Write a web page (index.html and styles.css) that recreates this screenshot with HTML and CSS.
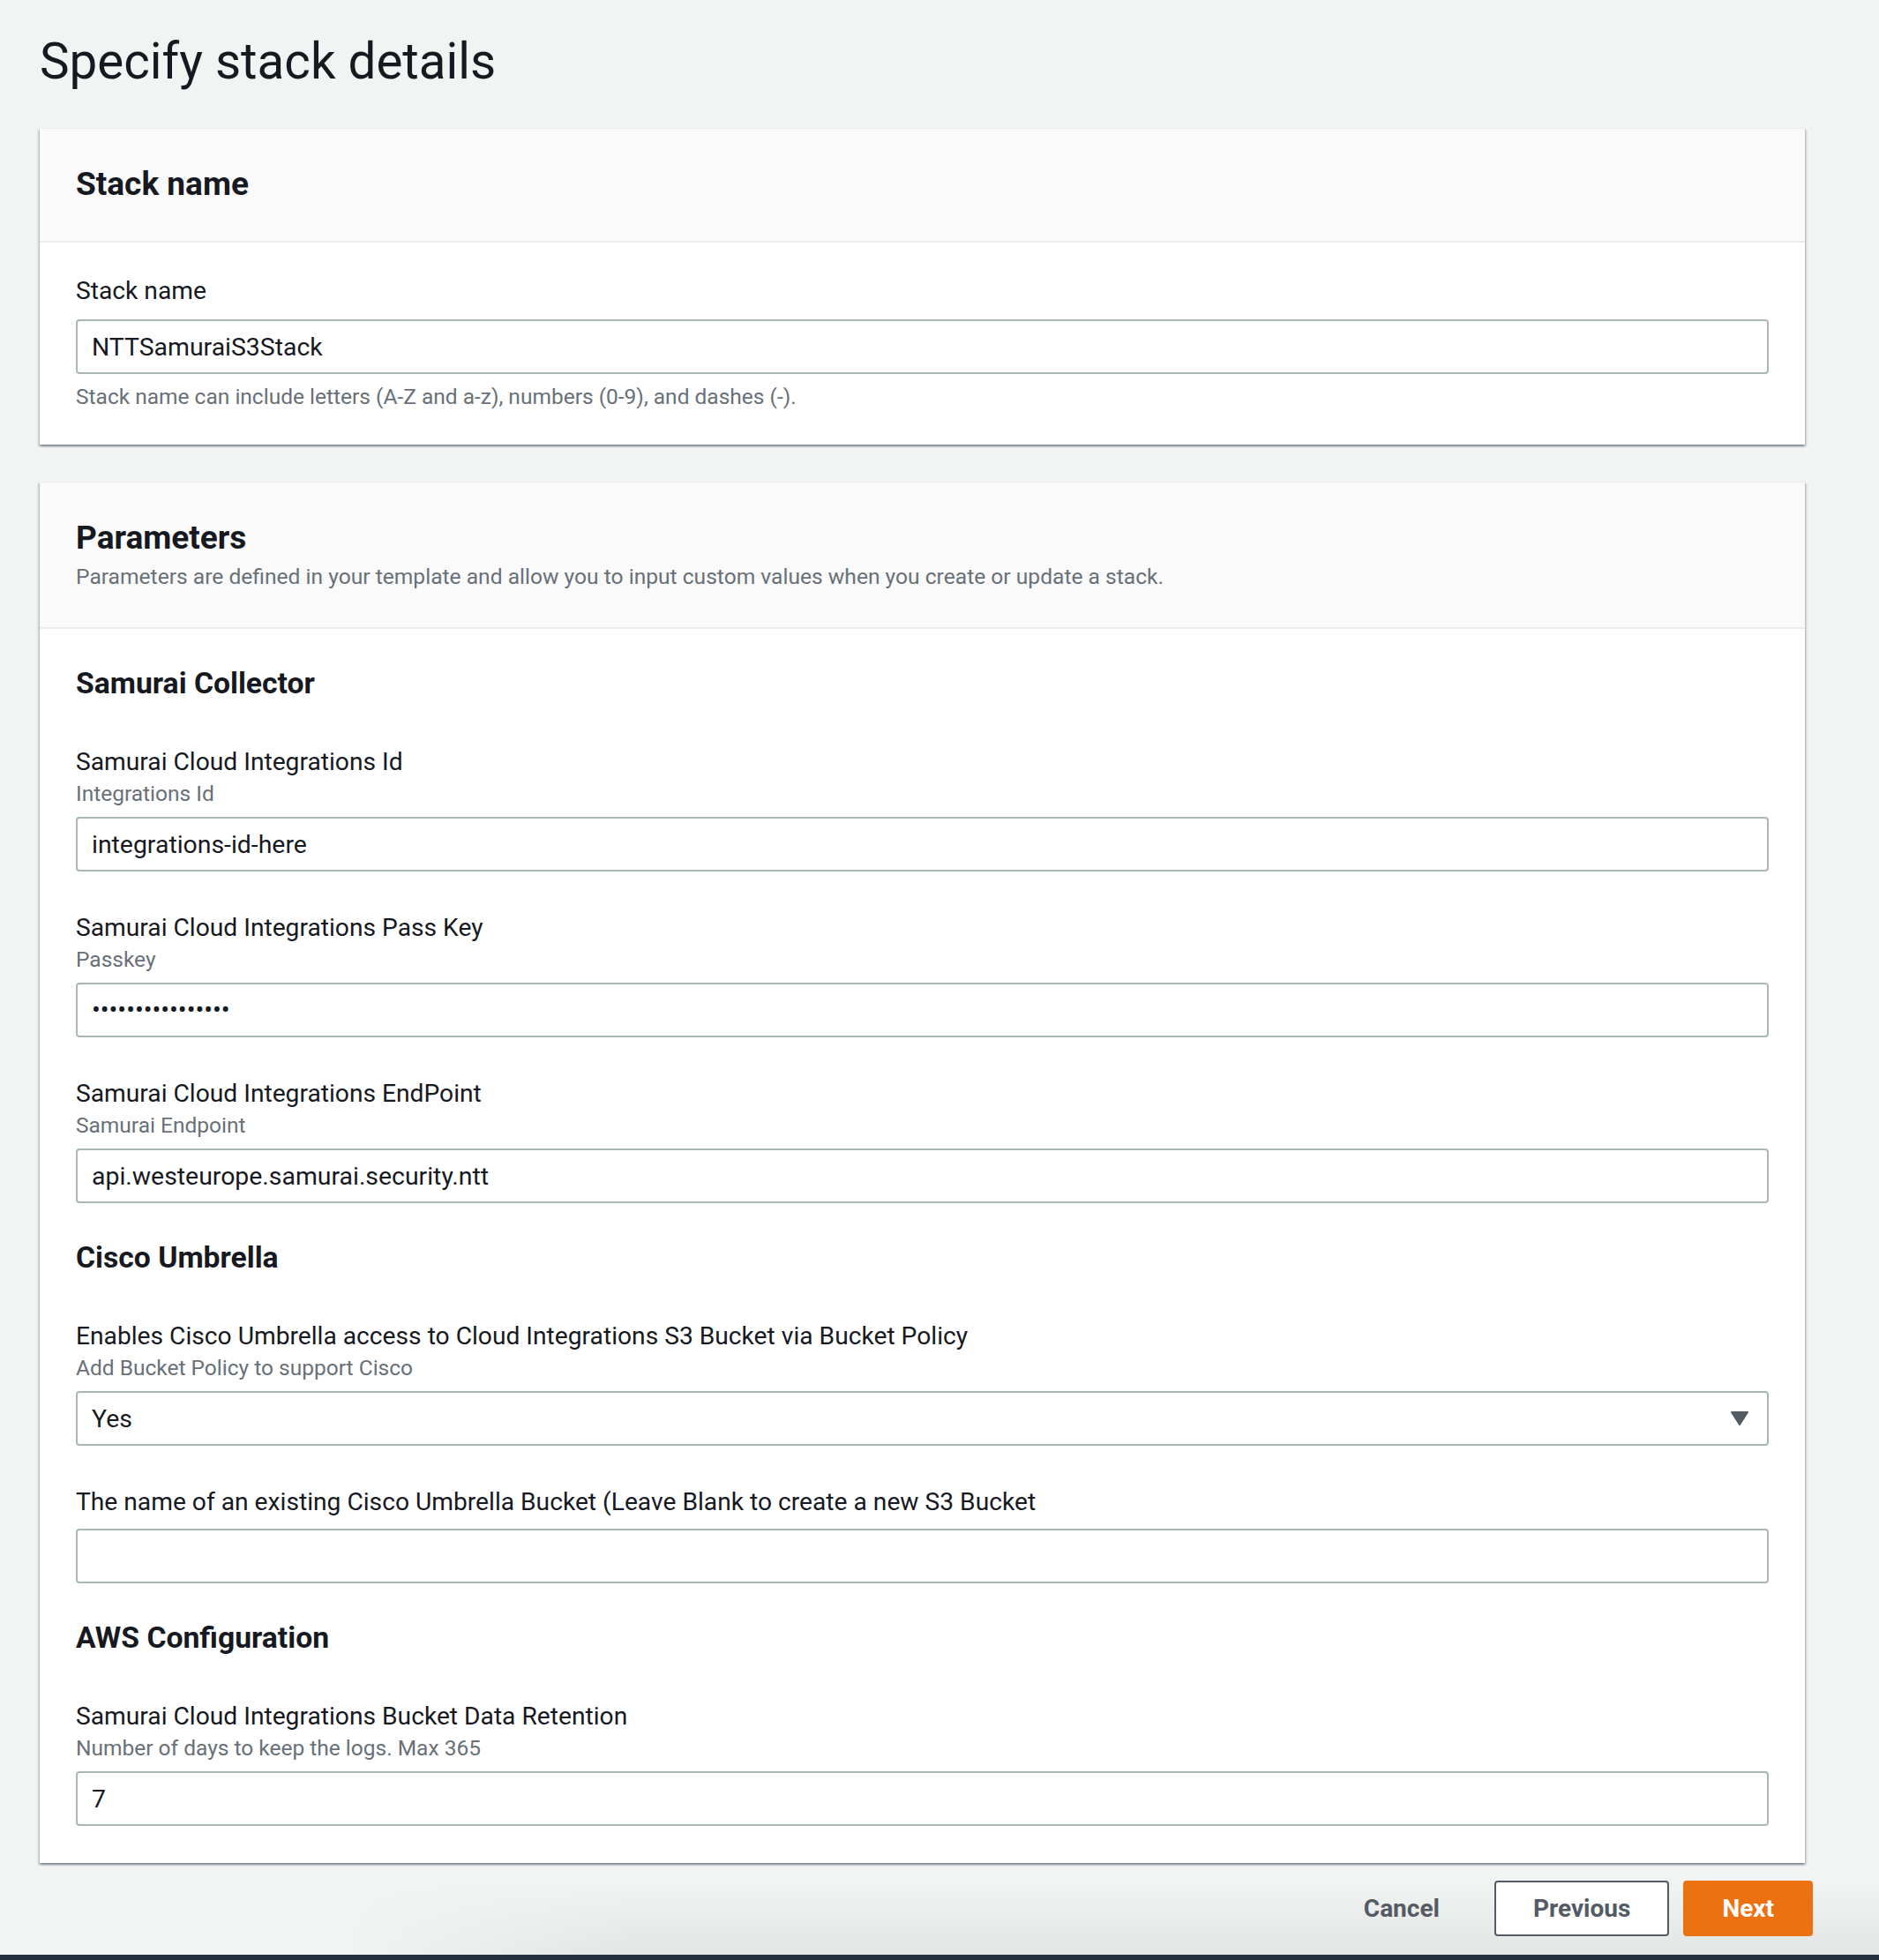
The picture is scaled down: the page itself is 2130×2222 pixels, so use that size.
FILE: index.html
```html
<!DOCTYPE html>
<html lang="en">
<head>
<meta charset="utf-8">
<title>Specify stack details</title>
<link rel="stylesheet" href="styles.css">
</head>
<body>
<div class="page">
  <h1 class="page-title">Specify stack details</h1>

  <section class="card">
    <header class="card-header">
      <h2>Stack name</h2>
    </header>
    <div class="card-body card-body--compact">
      <div class="field">
        <label class="field-label" for="stack-name">Stack name</label>
        <input class="text-input" id="stack-name" type="text" value="NTTSamuraiS3Stack">
        <p class="field-hint">Stack name can include letters (A-Z and a-z), numbers (0-9), and dashes (-).</p>
      </div>
    </div>
  </section>

  <section class="card card--params">
    <header class="card-header">
      <h2>Parameters</h2>
      <p class="card-desc">Parameters are defined in your template and allow you to input custom values when you create or update a stack.</p>
    </header>
    <div class="card-body">
      <div class="param-group">
        <h3>Samurai Collector</h3>
        <div class="field">
          <label class="field-label" for="p-id">Samurai Cloud Integrations Id</label>
          <p class="field-desc">Integrations Id</p>
          <input class="text-input" id="p-id" type="text" value="integrations-id-here">
        </div>
        <div class="field">
          <label class="field-label" for="p-key">Samurai Cloud Integrations Pass Key</label>
          <p class="field-desc">Passkey</p>
          <input class="text-input text-input--secret" id="p-key" type="password" value="abcdefghijklmnop">
        </div>
        <div class="field">
          <label class="field-label" for="p-endpoint">Samurai Cloud Integrations EndPoint</label>
          <p class="field-desc">Samurai Endpoint</p>
          <input class="text-input" id="p-endpoint" type="text" value="api.westeurope.samurai.security.ntt">
        </div>
      </div>

      <div class="param-group">
        <h3>Cisco Umbrella</h3>
        <div class="field">
          <label class="field-label">Enables Cisco Umbrella access to Cloud Integrations S3 Bucket via Bucket Policy</label>
          <p class="field-desc">Add Bucket Policy to support Cisco</p>
          <div class="select">
            <span class="select-value">Yes</span>
            <svg class="select-caret" width="22" height="18" viewBox="0 0 22 18" aria-hidden="true">
              <path d="M2 2 H20 L11 16 Z" fill="#545b64" stroke="#545b64" stroke-width="2" stroke-linejoin="round"/>
            </svg>
          </div>
        </div>
        <div class="field">
          <label class="field-label" for="p-bucket">The name of an existing Cisco Umbrella Bucket (Leave Blank to create a new S3 Bucket</label>
          <input class="text-input" id="p-bucket" type="text" value="">
        </div>
      </div>

      <div class="param-group">
        <h3>AWS Configuration</h3>
        <div class="field">
          <label class="field-label" for="p-retention">Samurai Cloud Integrations Bucket Data Retention</label>
          <p class="field-desc">Number of days to keep the logs. Max 365</p>
          <input class="text-input" id="p-retention" type="text" value="7">
        </div>
      </div>
    </div>
  </section>

  <footer class="actions">
    <button class="btn btn-link" type="button">Cancel</button>
    <button class="btn btn-normal" type="button">Previous</button>
    <button class="btn btn-primary" type="button">Next</button>
  </footer>
</div>
<div class="bottom-bar"></div>
</body>
</html>
```

FILE: styles.css
```css
* {
  box-sizing: border-box;
}

html,
body {
  margin: 0;
  padding: 0;
}

body {
  font-family: Roboto, "Liberation Sans", Arial, sans-serif;
  color: #16191f;
  background:
    linear-gradient(to right, #f2f3f3 18%, rgba(242, 243, 243, 0) 34%) left bottom / 100% 92px no-repeat,
    linear-gradient(to bottom, #f2f3f3 0%, #e2e4e4 100%) left bottom / 100% 92px no-repeat,
    #f2f3f3;
  min-height: 2222px;
  display: flex;
  flex-direction: column;
}

.page {
  flex: 1;
  display: flex;
  flex-direction: column;
  padding: 36px 84px 0 45px;
}

.page-title {
  margin: 0 0 41px;
  font-size: 56.5px;
  line-height: 68px;
  font-weight: 400;
  color: #16191f;
}

/* Cards */
.card {
  background: #fff;
  border-top: 1px solid #eaeded;
  box-shadow:
    0 2px 2px 0 rgba(0, 28, 36, 0.3),
    2px 2px 2px 0 rgba(0, 28, 36, 0.15),
    -2px 2px 2px 0 rgba(0, 28, 36, 0.15);
}

.card + .card {
  margin-top: 42px;
}

.card-header {
  background: #fafafa;
  padding: 41px 41px 42px;
  border-bottom: 2px solid #eaeded;
}

.card-header h2 {
  margin: 0;
  font-size: 37px;
  line-height: 44px;
  font-weight: 700;
  color: #16191f;
}

.card--params .card-header {
  padding-bottom: 41px;
}

.card-desc {
  margin: 6px 0 0;
  font-size: 24.6px;
  line-height: 32px;
  color: #687078;
}

.card-body {
  padding: 40px 41px 42px;
}

.card-body--compact {
  padding: 35px 41px 38px;
}

/* Parameter groups */
.param-group + .param-group {
  margin-top: 40px;
}

.param-group h3 {
  margin: 0 0 47px;
  font-size: 33.7px;
  line-height: 44px;
  font-weight: 700;
  color: #16191f;
}

/* Fields */
.field + .field {
  margin-top: 44px;
}

.field-label {
  display: block;
  font-size: 28.2px;
  line-height: 40px;
  color: #16191f;
}

.field-desc {
  margin: 0;
  font-size: 24.5px;
  line-height: 32px;
  color: #687078;
}

.field-hint {
  margin: 10px 0 0;
  font-size: 24.5px;
  line-height: 32px;
  color: #687078;
}

.text-input {
  display: block;
  width: 100%;
  height: 62px;
  margin: 10px 0 0;
  padding: 0 16px;
  border: 2px solid #aab7b8;
  border-radius: 4px;
  background: #fff;
  font-family: Roboto, "Liberation Sans", Arial, sans-serif;
  font-size: 28.4px;
  color: #16191f;
  outline: none;
}

.card-body--compact .text-input {
  margin-top: 12px;
}

.text-input--secret {
  font-size: 29px;
  letter-spacing: 0;
}

.select {
  display: flex;
  align-items: center;
  justify-content: space-between;
  height: 62px;
  margin-top: 10px;
  padding: 0 20px 0 16px;
  border: 2px solid #aab7b8;
  border-radius: 4px;
  background: #fff;
  font-size: 28.4px;
  color: #16191f;
}

.select-caret {
  display: block;
}

/* Footer actions */
.actions {
  display: flex;
  justify-content: flex-end;
  align-items: center;
  gap: 16px;
  margin: 20px -9px 21px 0;
}

.btn {
  display: inline-flex;
  align-items: center;
  justify-content: center;
  height: 63px;
  padding: 0 42px;
  border: 2px solid transparent;
  border-radius: 4px;
  font-family: Roboto, "Liberation Sans", Arial, sans-serif;
  font-size: 28px;
  font-weight: 700;
  line-height: 1;
  cursor: pointer;
}

.btn-link {
  background: transparent;
  color: #545b64;
  margin-right: 2px;
}

.btn-normal {
  background: #fff;
  border-color: #545b64;
  color: #545b64;
}

.btn-primary {
  background: #ec7211;
  border-color: #ec7211;
  color: #fff;
}

.bottom-bar {
  height: 7px;
  background: #232f3e;
}
```
